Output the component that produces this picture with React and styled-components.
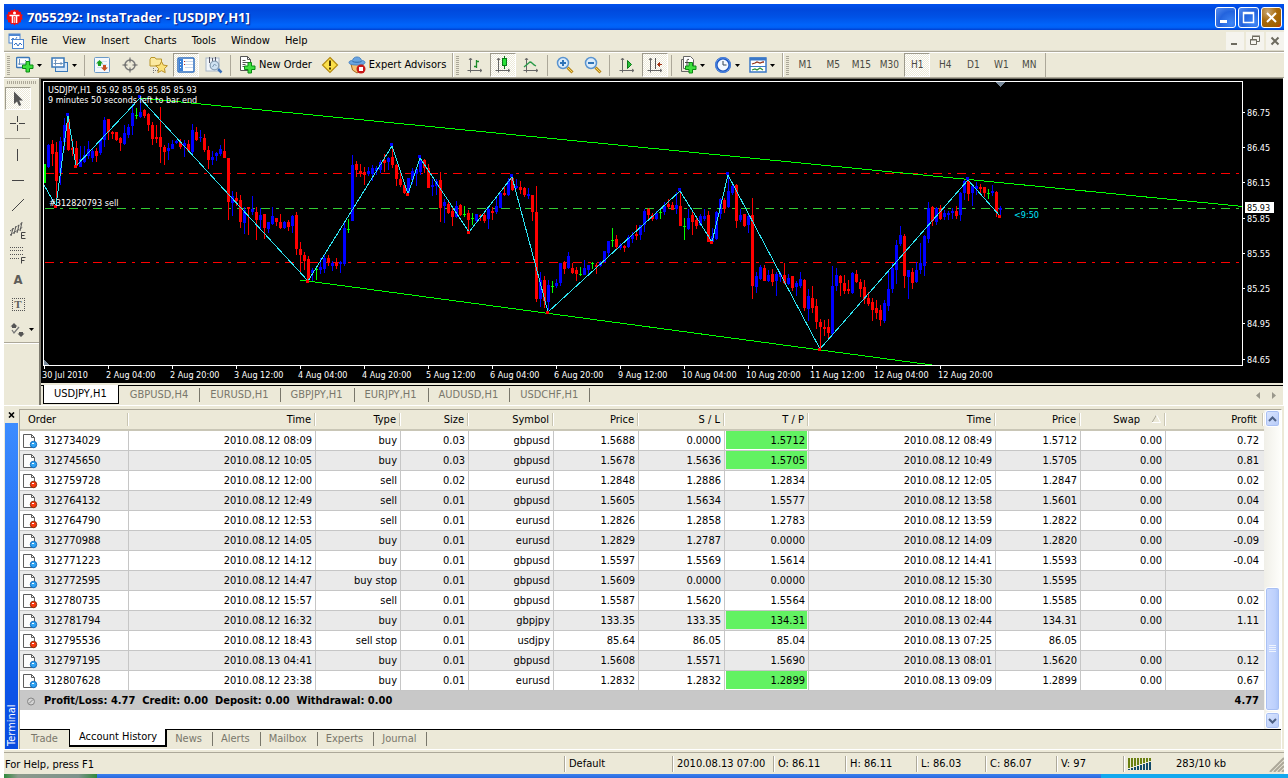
import React from "react";
import styled, { createGlobalStyle, css } from "styled-components";

const FACE = "#ece9d8";
const SHADE = "#aca899";
const UI_FONT = '"DejaVu Sans Condensed", "Liberation Sans", sans-serif';
const CHART_FONT_SIZE = 9;

const GlobalStyle = createGlobalStyle`
  * { box-sizing: border-box; }
  body { margin: 0; background: #fff; }
  button { font: inherit; color: inherit; border: 0; padding: 0; margin: 0; background: none; border-radius: 0; }
  svg { display: block; flex: none; }
`;

const Window = styled.div`
  margin: 4px 4px 0;
  background: ${FACE};
  font: 11px/14px ${UI_FONT};
  color: #000;
  cursor: default;
`;

/* ---------- title bar and menu ---------- */

const TitleBar = styled.header`
  display: flex;
  align-items: center;
  height: 26px;
  padding: 0 2px;
  gap: 2px;
  background: linear-gradient(#0050ee, #0048dc 20%, #0052e6 50%, #0064fb 80%, #0060f6 90%, #003fd0);
`;

const Title = styled.h1`
  flex: 1;
  margin: 0;
  padding-left: 2px;
  color: #fff;
  font: bold 13px/20px "Open Sans", sans-serif;
  text-shadow: 1px 1px 1px #0a1883;
  white-space: pre;
`;

const CaptionButton = styled.button`
  width: 21px;
  height: 21px;
  border: 1px solid #fff;
  border-radius: 3px;
  background: ${(p) =>
    p.$close
      ? "radial-gradient(circle at 30% 20%, #c9a875, #a8690a 45%, #a06000 80%, #e02000)"
      : "radial-gradient(circle at 80% 80%, #3f86f5, #2363dd 55%, #5a8fee)"};
`;

const MenuBar = styled.nav`
  display: flex;
  align-items: center;
  height: 22px;
  padding: 0 0 0 4px;
  border-bottom: 1px solid ${SHADE};
  box-shadow: inset 0 -1px #dcd9ca;
`;

const MenuItem = styled.button`
  height: 20px;
  padding: 0 7px 0 8px;
  &:first-of-type { margin-left: -1px; }
`;

const MdiButtons = styled.div`
  display: flex;
  gap: 2px;
  margin-left: auto;
`;

const MdiButton = styled.button`
  width: 18px;
  height: 18px;
  background: #f5f4ee;
`;

/* ---------- toolbar ---------- */

const ToolBar = styled.div`
  display: flex;
  height: 26px;
  border-top: 1px solid #fff;
  border-bottom: 1px solid ${SHADE};
`;

const ToolGroup = styled.div`
  display: flex;
  align-items: center;
  padding-right: 2px;
  border-left: 1px solid #fff;
  border-right: 1px solid ${SHADE};
`;

const Grip = styled.i`
  flex: none;
  width: 3px;
  height: 19px;
  margin: 0 2px;
  background: repeating-linear-gradient(${SHADE} 0 1px, transparent 1px 2px);
  ${(p) =>
    p.$across &&
    css`
      width: 30px;
      height: 3px;
      margin: 2px 2px;
      background: repeating-linear-gradient(90deg, ${SHADE} 0 1px, transparent 1px 2px);
    `}
`;

const ToolDivider = styled.i`
  flex: none;
  width: 2px;
  height: 21px;
  margin: 0 2px;
  border-left: 1px solid ${SHADE};
`;

const pressed = css`
  border-color: #9d9a8c #fff #fff #9d9a8c;
  background: repeating-conic-gradient(#fff 0 25%, ${FACE} 0 50%) 0 0 / 2px 2px;
`;

const ToolButton = styled.button`
  display: flex;
  align-items: center;
  justify-content: center;
  width: 26px;
  height: 24px;
  margin: 0 1px;
  border: 1px solid transparent;
  ${(p) => p.$pressed && pressed}
`;

const MenuToolButton = styled(ToolButton)`
  width: 33px;
  justify-content: flex-start;
  gap: 3px;
  padding-left: 2px;
`;

const WideToolButton = styled(ToolButton)`
  width: auto;
  gap: 3px;
  padding: 0 2px;
  white-space: nowrap;
`;

const PeriodButton = styled(ToolButton)`
  font-size: 10px;
  color: #4a4943;
`;

/* ---------- chart area ---------- */

const Workspace = styled.div`
  display: flex;
  border-bottom: 1px solid #fff;
`;

const SideBar = styled.div`
  width: 35px;
  flex: none;
  border-top: 1px solid #fff;
`;

const SideTools = styled.div`
  display: flex;
  flex-direction: column;
  align-items: flex-start;
  padding-left: 1px;
  border-bottom: 1px solid ${SHADE};
  box-shadow: 0 1px #fff;
`;

const SideButton = styled.button`
  display: flex;
  align-items: center;
  justify-content: center;
  width: 26px;
  height: 23px;
  margin: 1px 0;
  border: 1px solid transparent;
  ${(p) => p.$pressed && pressed}
`;

const SideMenuButton = styled(SideButton)`
  width: 33px;
  justify-content: flex-start;
  gap: 2px;
  padding-left: 3px;
`;

const SideDivider = styled.i`
  width: 25px;
  height: 1px;
  margin: 2px 0 3px;
  background: ${SHADE};
`;

const ChartColumn = styled.main`
  flex: 1;
  min-width: 0;
  border-left: 2px solid #7d7a6e;
  border-right: 1px solid #fff;
`;

const ChartWindow = styled.section`
  padding: 2px 1px 0 1px;
  border-top: 1px solid #716f64;
  background: #000;
`;

const PlotRow = styled.div`
  display: flex;
`;

const PlotFrame = styled.div`
  flex: 1;
  min-width: 0;
  margin-left: 1px;
  border: 1px solid #fff;
`;

const ChartTabs = styled.div`
  display: flex;
  align-items: flex-start;
  height: 20px;
  margin-top: 2px;
  padding-left: 2px;
  border-top: 1px solid #000;
`;

const ChartTab = styled.button`
  display: flex;
  align-items: center;
  height: 14px;
  margin-top: 2px;
  padding: 0 11px 0 10px;
  border-right: 1px solid #79776b;
  color: #79776b;
  ${(p) =>
    p.$active &&
    css`
      height: 19px;
      margin: -1px 1px 0 0;
      padding: 0 11px 0 10px;
      border: 1px solid #000;
      border-width: 0 1px 1px;
      background: #fff;
      color: #000;
    `}
`;

const TabArrows = styled.div`
  display: flex;
  gap: 12px;
  margin: 6px 7px 0 auto;
`;

/* ---------- terminal ---------- */

const Terminal = styled.section`
  display: flex;
  padding: 3px 2px 0 1px;
  border-bottom: 1px solid #fff;
`;

const TerminalStrip = styled.div`
  display: flex;
  flex-direction: column;
  align-items: center;
  width: 13px;
  flex: none;
  margin-right: 1px;
`;

const CloseButton = styled.button`
  display: flex;
  align-items: center;
  justify-content: center;
  height: 14px;
  width: 13px;
  padding-bottom: 3px;
`;

const TerminalCaption = styled.div`
  flex: 1;
  display: flex;
  align-items: center;
  width: 13px;
  padding-top: 3px;
  writing-mode: vertical-rl;
  transform: rotate(180deg);
  line-height: 13px;
  color: #fff;
  background: linear-gradient(#0a4ce0, #0c55e8 20%, #3c8cff 100%);
`;

const TerminalBody = styled.div`
  flex: 1;
  min-width: 0;
  border-left: 1px solid ${SHADE};
  border-top: 1px solid ${SHADE};
  border-right: 1px solid #fff;
`;

const TableArea = styled.div`
  display: flex;
  background: #fff;
  border-bottom: 1px solid #000;
`;

const TableHolder = styled.div`
  flex: 1;
  min-width: 0;
  padding-bottom: 19px;
`;

const OrdersTable = styled.table`
  width: 100%;
  table-layout: fixed;
  border-collapse: separate;
  border-spacing: 0;
`;

const HeadCell = styled.th`
  height: 21px;
  padding: 0 5px 0 8px;
  border-bottom: 2px solid #c9c6b6;
  background: linear-gradient(90deg, transparent calc(100% - 2px), #c9c5b2 calc(100% - 2px) calc(100% - 1px), #fff calc(100% - 1px)) 0 3px / 100% 13px no-repeat ${FACE};
  font-weight: normal;
  text-align: ${(p) => (p.$first ? "left" : "right")};
  &:last-child { padding-right: 7px; }
`;

const SortMark = styled.span`
  display: inline-block;
  margin-left: 12px;
`;

const Cell = styled.td`
  height: 20px;
  padding: 0 3px 0 0;
  border-right: 1px solid #c6c6c6;
  border-bottom: 1px solid #c6c6c6;
  text-align: right;
  white-space: nowrap;
  ${(p) =>
    p.$hit &&
    css`
      background: linear-gradient(#62f262, #62f262) 1px 0 / calc(100% - 2px) calc(100% - 1px) no-repeat;
    `}
  &:last-child { padding-right: 5px; border-right: 0; }
`;

const OrderRow = styled.tr`
  background: ${(p) => (p.$alt ? "#eaeaea" : "#fff")};
`;

const OrderCell = styled.td`
  height: 20px;
  padding: 0 0 0 3px;
  border-right: 1px solid #c6c6c6;
  border-bottom: 1px solid #c6c6c6;
`;

const OrderLabel = styled.div`
  display: flex;
  align-items: center;
  gap: 6px;
`;

const SummaryCell = styled.td`
  height: 19px;
  padding: 0 5px 0 3px;
  background: #c8c8c8;
  font-weight: bold;
  white-space: pre;
  text-align: ${(p) => (p.$right ? "right" : "left")};
`;

const ScrollBar = styled.div`
  display: flex;
  flex-direction: column;
  width: 17px;
  flex: none;
  padding-left: 1px;
  background: linear-gradient(90deg, #f0efe8, #fefefb);
`;

const ScrollButton = styled.button`
  display: flex;
  align-items: center;
  justify-content: center;
  flex: none;
  width: 15px;
  height: 17px;
  border: 1px solid #fff;
  border-radius: 3px;
  background: linear-gradient(135deg, #dbe6fe, #b7cbf8);
  box-shadow: inset 0 0 0 1px #a9c0f3;
`;

const ScrollThumb = styled(ScrollButton)`
  height: 39%;
  margin: auto 0 1px;
  background: linear-gradient(90deg, #cbdafe, #bdd0fc 70%, #aac4f8);
`;

const PanelTabs = styled.div`
  display: flex;
  align-items: flex-start;
  height: 19px;
`;

const PanelTab = styled.button`
  height: 14px;
  margin-top: 2px;
  padding: 0 10px 0 8px;
  border-right: 1px solid ${(p) => (p.$first ? "transparent" : "#79776b")};
  color: #79776b;
  ${(p) => p.$first && "padding-left: 11px;"}
  ${(p) =>
    p.$active &&
    css`
      height: 18px;
      margin-top: -1px;
      padding: 0 8px 0 9px;
      border: 1px solid #000;
      border-width: 0 2px 2px 1px;
      background: #fff;
      color: #000;
    `}
`;

/* ---------- status bar ---------- */

const StatusBar = styled.footer`
  display: flex;
  align-items: stretch;
  margin-top: 2px;
  height: 22px;
  padding: 3px 0 2px;
  border-top: 1px solid ${SHADE};
`;

const StatusText = styled.div`
  flex: 1;
  padding-left: 1px;
  line-height: 18px;
`;

const StatusCell = styled.div`
  width: ${(p) => p.$width}px;
  flex: none;
  padding-left: 4px;
  border-left: 1px solid ${SHADE};
  box-shadow: inset 1px 0 #fff;
  line-height: 18px;
  display: flex;
  align-items: center;
`;

const Traffic = styled.span`
  flex: 1;
  padding-left: 24px;
`;

const TaskBar = styled.div`
  display: flex;
  height: 4px;
  margin-left: 4px;
  background: linear-gradient(#3a80ee, #2a68dd);
`;

const StartEdge = styled.div`
  width: 93px;
  background: linear-gradient(90deg, #2f8a3c, #8c9a8c 15%, #7d938c 80%, #2f8a3c);
`;

const TrayEdge = styled.div`
  width: 187px;
  margin-left: auto;
  background: #12a8ee;
`;

/* ---------- icons ---------- */

const Icon = ({ w = 18, h = 18, children }) => (
  <svg width={w} height={h} viewBox={`0 0 ${w} ${h}`} fill="none" aria-hidden="true">
    {children}
  </svg>
);

const Plus = ({ x, y }) => (
  <path
    transform={`translate(${x} ${y})`}
    d="M4 .5h3.500v3.500h3.500v3.500h-3.500v3.500h-3.500v-3.500h-3.500v-3.500h3.500z"
    fill="#3ee03e"
    stroke="#0a8a12"
  />
);

const DropArrow = () => (
  <Icon w={5} h={3}>
    <path d="M0 0h5L2.500 3z" fill="#000" />
  </Icon>
);

const Logo = () => (
  <Icon w={17} h={17}>
    <path
      d="M8.500 0l1.500 1.600 2-.8.9 2 2.100.2-.1 2.100 1.900 1-1 1.900 1 2-1.900 1.100.1 2.100-2.100.3-.9 2-2-.7-1.500 1.700L7 14.800l-2 .7-.9-2-2.100-.3.1-2.100-1.900-1.100 1-2-1-1.900 1.900-1L2 3l2.100-.2.9-2 2 .8z"
      fill="#f01010"
    />
    <circle cx="8.500" cy="4" r="1.500" fill="#fff" />
    <path d="M3.500 6.500h10M6.500 7v7M10.500 7v7" stroke="#fff" strokeWidth="1.600" />
    <path d="M8.500 8v6" stroke="#ffb0a0" />
  </Icon>
);

const ChartsIcon = () => (
  <Icon w={16} h={16}>
    <rect x="1" y="1" width="11" height="9" fill="#fff" stroke="#4d86d0" />
    <path d="M1 2h11" stroke="#4d86d0" strokeWidth="2" />
    <path d="M3 7l2-2 2 2 2-3" stroke="#4d86d0" />
    <rect x="4.500" y="6.500" width="11" height="9" fill="#fff" stroke="#4d86d0" />
    <path d="M6 12l2-2 2 3 2-3 2 2" stroke="#2f6cc0" />
  </Icon>
);

const NewChartIcon = () => (
  <Icon>
    <rect x=".5" y="1.500" width="13" height="10" rx="1" fill="#fff" stroke="#3a78b8" strokeWidth="1.500" />
    <path d="M3.500 3v6M2 8h9M9 4l2 2" stroke="#6a90b8" />
    <Plus x={6} y={5} />
  </Icon>
);

const ProfilesIcon = () => (
  <Icon>
    <rect x="4.500" y="6.500" width="12" height="9" fill="#d8e8f8" stroke="#3a78b8" />
    <rect x="1" y="2" width="12" height="9" fill="#fff" stroke="#3a78b8" strokeWidth="1.500" />
    <path d="M4.500 3.500v6M2.500 7.500h9M3.500 4.500h2M9.500 6.500l2 1-2 1" stroke="#6a90b8" />
  </Icon>
);

const MarketWatchIcon = () => (
  <Icon>
    <rect x="1.500" y="1.500" width="15" height="15" rx="1" fill="#f4f8fc" stroke="#6a9ac8" />
    <path d="M4 5.500h10M4 8.500h10M4 11.500h10" stroke="#cfe0f0" />
    <path d="M6.500 4L10 7.500H8V10H5V7.500H3z" fill="#18a020" />
    <path d="M11.500 15L8 11.500h2V9h3v2.500h2z" fill="#c85020" />
  </Icon>
);

const CrosshairIcon = () => (
  <Icon>
    <circle cx="9" cy="9" r="5" stroke="#7a7a7a" strokeWidth="1.500" />
    <path d="M9 1.500v5M9 11.500v5M1.500 9h5M11.500 9h5" stroke="#5c5c5c" />
  </Icon>
);

const FavoritesIcon = () => (
  <Icon w={19}>
    <path d="M1 3.500l1-2h4l1 1.500h5.500v7H1z" fill="#fbe9a0" stroke="#b8962a" />
    <path d="M4.500 12v5M6 14.500h3" stroke="#777" strokeDasharray="1 1" />
    <path
      d="M12.500 5.500l1.900 3.600 4 .6-2.900 2.900.7 4-3.700-1.900-3.600 1.900.7-4-2.900-2.900 4-.6z"
      fill="#fbe27a"
      stroke="#b8902a"
    />
  </Icon>
);

const TerminalIcon = () => (
  <Icon>
    <rect x="1" y="2" width="16" height="14" rx="1" fill="#fff" stroke="#2f6fc0" strokeWidth="1.500" />
    <path d="M2 3h4v12H2z" fill="#3a80d8" />
    <path d="M3 5.500h1M3 8.500h1M3 11.500h1" stroke="#fff" />
    <path d="M8 5.500h8M8 8.500h8M8 11.500h8" stroke="#c8d8ec" />
    <path d="M7 5h1v1H7zM7 8h1v1H7z" fill="#c03020" />
  </Icon>
);

const MagnifierHandle = () => (
  <path d="M11.500 11.500l5 5" stroke="#b88618" strokeWidth="3" />
);

const TesterIcon = () => (
  <Icon>
    <rect x="1" y="2" width="13" height="13" fill="#f2f6fa" stroke="#a8b8c8" />
    <path d="M4.500 1v6M7.500 2v4M10.500 1v6" stroke="#556" />
    <path d="M13 13l3.500 3.500" stroke="#3a70b8" strokeWidth="2.500" />
    <circle cx="9.500" cy="9.500" r="4.300" fill="#cfe2f2" stroke="#8aa0b4" strokeWidth="1.300" />
    <path d="M7.500 11l2-3 2 2" stroke="#7c98b0" />
  </Icon>
);

const NewOrderIcon = () => (
  <Icon>
    <path d="M2.500.500h7l3 3v11h-10z" fill="#fff" stroke="#555" />
    <path d="M9.500.500v3h3" stroke="#555" />
    <path d="M4.500 4.500h3M4.500 6.500h6M4.500 8.500h3M4.500 10.500h2" stroke="#555" />
    <Plus x={6} y={6} />
  </Icon>
);

const WarningIcon = () => (
  <Icon>
    <path d="M9 1.500L16.500 9 9 16.500 1.500 9z" fill="#fbe04a" stroke="#b48a10" strokeWidth="1.200" />
    <path d="M9 4.500v5.500M9 11.500v2" stroke="#4a3500" strokeWidth="2" />
  </Icon>
);

const ExpertIcon = () => (
  <Icon>
    <path d="M3 8h12l-1.500 6L9 17l-4.500-3z" fill="#f4c070" stroke="#a86818" />
    <path d="M1 6.500c0-1.500 2-2 3.500-2C5 2 7 1 9 1s4 1 4.500 3.500c1.500 0 3.500.5 3.500 2C17 8.500 13 9 9 9S1 8.500 1 6.500z" fill="#6aa4e0" stroke="#4a84c4" />
    <path d="M4.500 5.500c2 1 7 1 9 0" stroke="#2f68a8" />
    <circle cx="13" cy="13" r="4.500" fill="#c81818" />
    <rect x="11" y="11" width="4" height="4" fill="#fff" />
  </Icon>
);

const Axes = () => <path d="M4.500 2.500v14M1.500 14.500h14M3 4l1.500-2L6 4M14 13l2 1.500-2 1.500" stroke="#666" />;

const BarChartIcon = () => (
  <Icon>
    <Axes />
    <path d="M10.500 4v8M8 10.500h2.500M10.500 5.500h2.500" stroke="#1c8a28" strokeWidth="1.300" />
  </Icon>
);

const CandleIcon = () => (
  <Icon>
    <Axes />
    <path d="M10.500 0v13" stroke="#0a7a18" />
    <rect x="8.500" y="2.500" width="4" height="7" fill="#28e038" stroke="#0a7a18" />
  </Icon>
);

const LineChartIcon = () => (
  <Icon>
    <Axes />
    <path d="M2 11l6-5c2 0 2 2 6 4" stroke="#2a9a48" strokeWidth="1.300" />
  </Icon>
);

const ZoomIcon = ({ plus }) => (
  <Icon>
    <MagnifierHandle />
    <path d="M12 12l4 4" stroke="#f6d860" />
    <circle cx="7" cy="7" r="5.500" fill="#dcecfa" stroke="#5a94d0" strokeWidth="1.500" />
    <path d={plus ? "M4 7h6M7 4v6" : "M4 7h6"} stroke="#2f74b8" strokeWidth="2" />
  </Icon>
);

const AutoScrollIcon = () => (
  <Icon>
    <Axes />
    <path d="M9.500 4.500v8l4-4z" fill="#28c038" stroke="#0a7a18" />
  </Icon>
);

const ShiftIcon = () => (
  <Icon>
    <Axes />
    <path d="M9.500 2v11" stroke="#555" />
    <path d="M16 8.500h-4M13.500 6.500l-2 2 2 2z" stroke="#a03010" fill="#a03010" />
  </Icon>
);

const IndicatorsIcon = () => (
  <Icon>
    <path d="M4.500.500h7l3 3v9h-10z" fill="#fff" stroke="#666" />
    <path d="M4.500 3.500h-2v12h8" stroke="#666" />
    <path d="M10 3.500c-2-1-2 1-2 2v5M6 6.500h4" stroke="#444" />
    <Plus x={6} y={6} />
  </Icon>
);

const ClockIcon = () => (
  <Icon>
    <circle cx="9" cy="9" r="6.700" fill="#f2f8ff" stroke="#1f58c0" strokeWidth="2.600" />
    <circle cx="9" cy="9" r="7.200" stroke="#5a94ec" />
    <path d="M9 5v4h3.500" stroke="#345" />
  </Icon>
);

const TemplateIcon = () => (
  <Icon>
    <rect x="1" y="2" width="16" height="14" fill="#fff" stroke="#3a78c8" strokeWidth="1.500" />
    <path d="M1 3h16" stroke="#3a78c8" strokeWidth="3" />
    <path d="M1 10.500h16" stroke="#3a78c8" />
    <path d="M3 8l3-1 2-1 3 1 3-1h1" stroke="#903018" strokeWidth="1.300" />
    <path d="M3 14l3-1 2 1 3-2 3 2" stroke="#2a9038" strokeWidth="1.300" />
  </Icon>
);

const CursorIcon = () => (
  <Icon>
    <path d="M5 1.500v12.500l3-2.500 2 4.500 2.200-1-2-4.500H14z" fill="#555" />
  </Icon>
);

const CrossIcon = () => (
  <Icon>
    <path d="M8.500 1v6M8.500 10v6M1 8.500h6M10 8.500h6" stroke="#444" />
  </Icon>
);

const SideLine = ({ d }) => (
  <Icon>
    <path d={d} stroke="#444" />
  </Icon>
);

const ChannelIcon = () => (
  <Icon>
    <path d="M1 10L13 2M1 14L14 6" stroke="#555" strokeDasharray="2 1" />
    <path d="M2 15l2-8M5 13l2-8M8 12l2-8M11 10l2-9" stroke="#555" />
    <path d="M16.500 11.500h-4v6h4M12.500 14.500h3" stroke="#444" />
  </Icon>
);

const FiboIcon = () => (
  <Icon>
    <path d="M1 1.500h14M1 4.500h14M1 8.500h14M1 12.500h10" stroke="#555" strokeDasharray="1 1" />
    <path d="M12.500 17.500v-6h4M12.500 14.500h3" stroke="#444" />
  </Icon>
);

const LetterIcon = styled.span`
  font: bold 13px/18px ${UI_FONT};
  color: #5e5d58;
`;

const LabelBox = styled.span`
  width: 13px;
  height: 13px;
  border: 1px dotted #555;
  font: bold 11px/11px "Liberation Serif", serif;
  color: #5e5d58;
  text-align: center;
`;

const ArrowsIcon = () => (
  <Icon>
    <path d="M5 2l3.500 3.500H7V7H3V5.500H1.500zM12 16l-3.500-3.500H10V11h4v1.500h1.500z" fill="#555" />
    <path d="M3 9l2 3 5-6" stroke="#777" strokeWidth="1.300" />
  </Icon>
);

const OrderIcon = ({ side }) => (
  <Icon w={15} h={16}>
    <path d="M.5 1.500h8l3 3v10h-11z" fill="#fdfdfd" stroke="#5c5c5c" />
    <path d="M8.500 1.500v3h3" stroke="#5c5c5c" />
    <circle cx="10.500" cy="11.500" r="3.200" fill={side === "buy" ? "#2fa4f4" : "#f83a10"} stroke={side === "buy" ? "#1568b8" : "#8a3008"} />
    <path d="M9 10.500h2" stroke="#fff" />
  </Icon>
);

const SummaryIcon = () => (
  <Icon w={15} h={16}>
    <circle cx="8" cy="8.500" r="3.500" fill="#d4d4d4" stroke="#858585" />
    <path d="M6 10.500l4-4" stroke="#858585" />
  </Icon>
);

const TrafficIcon = () => (
  <Icon w={24} h={12}>
    {[0, 1, 2, 3, 4, 5, 6, 7].map((i) => (
      <g key={i} shapeRendering="crispEdges">
        <rect x={i * 3} y="0" width="2" height={10 - i} fill="#6a8010" />
        <rect x={i * 3} y={11 - i} width="2" height={i + 1} fill="#124a6a" />
      </g>
    ))}
  </Icon>
);

/* ---------- chart data ---------- */

// One entry per bar: colour, then the y of its high, body top, body bottom and low.
const BARS = `
G 84 84 103 103|B 64 65 87 88|R 60 64 74 86|R 62 72 101 126|B 57 61 93 105|B 38 45 62 70|R 34 39 70 71|R 59 68 70 76
R 61 68 86 87|B 66 79 87 87|B 66 75 82 83|B 61 69 76 79|B 68 71 78 82|R 68 71 76 82|B 59 60 73 75|B 37 40 60 67
R 39 39 52 60|R 51 52 54 59|R 52 52 60 61|R 57 58 63 71|B 45 53 64 65|B 44 47 55 58|B 24 33 46 55|G 28 35 35 39
B 18 32 37 38|R 29 30 36 38|R 33 34 45 51|R 42 45 59 65|R 45 57 59 63|R 27 57 67 83|R 65 67 72 85|B 63 68 71 80
B 60 64 69 69|B 60 61 63 64|R 59 62 67 69|B 60 63 66 77|R 60 64 71 72|B 44 50 72 74|R 47 52 60 61|B 50 57 58 62
R 54 58 70 72|R 66 70 80 89|B 71 77 80 85|B 72 73 76 81|B 65 69 74 76|R 59 71 78 78|R 78 78 122 140|B 111 116 123 136
R 112 118 121 126|R 115 120 142 148|B 127 130 143 154|R 127 127 129 155|B 116 129 132 135|R 127 132 140 160|B 128 135 140 150|R 134 134 148 159
B 142 142 149 153|B 127 136 144 145|R 138 138 142 146|R 134 142 148 149|B 141 142 148 149|R 140 142 147 151|B 135 136 146 153|R 132 135 169 175
R 162 169 175 193|R 172 175 181 190|R 176 179 200 202|B 188 190 193 201|G 186 189 189 200|B 178 187 190 194|B 174 178 189 193|R 175 178 183 186
B 181 183 186 191|R 178 182 186 189|B 181 182 184 193|B 143 148 184 186|G 139 149 149 153|B 75 85 141 141|R 81 84 90 97|R 84 91 94 97
R 87 92 95 105|B 87 91 94 96|B 85 88 94 101|B 86 88 91 95|B 80 82 90 93|R 74 80 83 92|B 77 78 82 90|R 64 77 85 88
R 84 85 99 106|R 92 99 105 107|R 102 105 113 114|B 98 98 113 115|B 88 91 100 104|B 88 89 94 106|B 77 79 92 95|R 79 80 88 93
R 84 88 108 108|B 99 105 107 116|B 99 101 106 115|R 92 100 128 142|B 119 122 126 143|R 122 124 133 134|R 126 131 137 146|B 121 126 137 138
R 124 125 135 136|G 126 134 134 137|R 130 133 140 151|G 133 138 138 145|B 134 134 141 143|R 134 135 137 141|R 132 135 141 143|B 126 129 139 149
R 127 131 133 140|B 116 126 132 134|B 112 113 128 128|R 107 113 115 116|B 98 101 115 116|R 96 98 110 111|B 99 106 108 109|R 101 107 110 114
R 107 108 115 117|B 108 114 116 119|R 115 115 132 141|R 106 132 219 222|B 192 200 219 227|R 196 200 221 228|B 200 205 222 230|G 201 206 206 213
B 199 203 206 208|B 183 183 203 206|R 181 182 189 194|B 172 176 188 189|R 183 188 193 194|R 187 190 194 201|G 187 194 194 196|B 180 188 195 195
B 185 185 190 195|G 182 183 183 189|R 183 185 187 194|B 181 182 186 187|B 171 171 182 183|B 161 161 173 177|G 148 160 160 167|R 155 159 167 170
B 163 165 168 170|R 165 166 168 172|B 155 157 167 168|B 152 155 159 163|R 145 154 156 160|B 145 145 155 160|B 129 131 145 152|R 128 129 135 139
R 133 135 139 141|B 131 133 139 140|G 128 132 132 139|B 122 126 132 135|R 119 124 127 129|R 122 125 130 130|B 112 125 129 134|R 111 126 146 146
G 138 146 146 160|B 129 138 149 150|R 131 135 142 155|R 138 140 146 149|B 134 136 145 146|B 129 136 139 141|R 131 135 162 162|B 148 156 162 163
B 131 132 159 160|B 118 119 134 139|R 118 120 129 133|B 95 111 127 128|B 103 106 113 115|R 104 105 141 148|B 129 135 140 142|R 134 134 146 147
B 135 136 145 153|R 118 135 206 219|B 192 196 207 213|B 185 187 199 200|R 185 188 201 201|B 190 195 201 202|R 189 194 202 206|B 192 194 201 216
B 192 194 197 202|R 183 195 203 204|B 194 198 204 205|R 196 196 208 211|B 201 203 207 216|B 192 199 206 208|R 199 200 228 231|B 209 216 229 241
R 206 218 228 233|R 219 226 242 249|R 239 242 247 268|R 240 247 249 256|R 239 247 253 260|B 186 206 254 256|B 188 195 206 211|R 195 196 203 216
R 195 203 211 214|R 200 209 211 214|B 192 193 213 214|R 190 194 202 203|R 199 202 209 217|R 200 207 219 224|R 212 218 224 226|R 218 222 230 241
R 220 228 233 239|R 225 230 240 246|B 220 223 241 243|B 191 209 226 231|B 183 188 209 213|B 160 165 190 204|B 146 155 164 166|R 154 156 196 208
B 190 190 197 219|R 188 192 203 209|B 182 190 202 203|B 163 183 190 194|B 155 156 186 196|B 122 128 159 163|R 126 127 141 146|B 127 128 142 145
R 125 128 139 140|B 130 133 137 140|B 131 133 135 140|B 128 131 133 139|R 126 131 136 139|B 112 113 135 141|B 100 101 113 120|R 99 101 114 121
B 105 106 113 126|B 102 106 109 115|R 104 107 109 114|R 107 107 113 117|G 109 113 113 119|B 105 111 113 116|R 111 112 132 137|B 126 128 130 136`
  .trim()
  .split(/[|\n]/)
  .map((entry) => {
    const [tone, ...ys] = entry.split(" ");
    return [tone, ...ys.map(Number)];
  });

const BAR_COLOURS = { R: "#ff0000", B: "#0000ff", G: "#00ff00" };
const BAR_STEP = 4;

const ZIGZAG = [
  [0, 103], [12, 124], [24, 34], [32, 84], [96, 16], [264, 199], [348, 64], [364, 112], [376, 76], [425, 150],
  [468, 95], [504, 230], [636, 109], [668, 160], [684, 93], [776, 267], [924, 98], [956, 134],
];

const PRICES = [
  ["86.75", 112], ["86.45", 147], ["86.15", 182], ["85.85", 218],
  ["85.55", 253], ["85.25", 288], ["84.95", 323], ["84.65", 359],
];

const TIMES = [
  "30 Jul 2010", "2 Aug 04:00", "2 Aug 20:00", "3 Aug 12:00", "4 Aug 04:00", "4 Aug 20:00", "5 Aug 12:00",
  "6 Aug 04:00", "6 Aug 20:00", "9 Aug 12:00", "10 Aug 04:00", "10 Aug 20:00", "11 Aug 12:00", "12 Aug 04:00",
  "12 Aug 20:00",
];

const PlotSvg = styled.svg`
  width: 100%;
  height: 283px;
  font: ${CHART_FONT_SIZE}px ${UI_FONT};
  text { white-space: pre; }
`;

const AxisSvg = styled.svg`
  font: ${CHART_FONT_SIZE}px ${UI_FONT};
`;

const Level = ({ y, color }) => (
  <line x1="1" x2="100%" y1={y + 0.5} y2={y + 0.5} stroke={color} strokeDasharray="9 6 3 6" />
);

function Plot() {
  return (
    <PlotSvg role="img" aria-label="USDJPY H1 candlestick chart">
      <g shapeRendering="crispEdges">
        <Level y={91} color="#ff0000" />
        <Level y={126} color="#32cd32" />
        <Level y={180} color="#ff0000" />
        <g transform="translate(0 -2)">
          {BARS.map(([tone, high, top, bottom, low], i) => (
            <g key={i} fill={BAR_COLOURS[tone]}>
              <rect x={i * BAR_STEP} y={high} width="1" height={low - high} />
              <rect x={i * BAR_STEP - 1} y={top} width="3" height={Math.max(1, bottom - top)} />
            </g>
          ))}
        </g>
        <path d="M951 0h10l-5 5zM0 278v5h5z" fill="#778899" />
        <path d="M96 16L1199 124.500M256 198L888 283" stroke="#00ff00" fill="none" />
        <polyline points={ZIGZAG.map((p) => p.join(",")).join(" ")} stroke="#2ee6f4" fill="none" />
        {ZIGZAG.slice(1).map(([x, y], i) => (
          <rect key={x} x={x - 2} y={i % 2 ? y - 3 : y - 1} width="3" height="3" fill={i % 2 ? "#0000ff" : "#ff0000"} />
        ))}
      </g>
      <g fill="#fff">
        <text x="4" y="11">{"USDJPY,H1  85.92 85.95 85.85 85.93"}</text>
        <text x="4" y="21">9 minutes 50 seconds left to bar end</text>
        <text x="5" y="124">#312820793 sell</text>
        <text x="970" y="136" fill="#00e8ff">&lt;9:50</text>
      </g>
    </PlotSvg>
  );
}

function PriceAxis() {
  return (
    <AxisSvg width="39" height="285">
      {PRICES.map(([label, y]) => (
        <g key={label} fill="#fff">
          <rect x="0" y={y - 81} width="2" height="1" />
          <text x="4" y={y - 77}>{label}</text>
        </g>
      ))}
      <rect x="2" y="121" width="29" height="11" fill="#fff" />
      <text x="4" y="130" fill="#000">85.93</text>
    </AxisSvg>
  );
}

function TimeAxis() {
  return (
    <AxisSvg width="100%" height="17">
      {TIMES.map((label, i) => (
        <g key={label} fill="#fff">
          <rect x={2 + i * 64} y="0" width="1" height="3" />
          <text x={i * 64} y="12">{label}</text>
        </g>
      ))}
    </AxisSvg>
  );
}

/* ---------- orders ---------- */

const COLUMNS = [
  ["Order", 109], ["Time", 187], ["Type", 85], ["Size", 68], ["Symbol", 85], ["Price", 85],
  ["S / L", 86], ["T / P", 84], ["Time", 187], ["Price", 85], ["Swap", 85], ["Profit", 98],
];

const ORDERS = [
  ["312734029", "2010.08.12 08:09", "buy", "0.03", "gbpusd", "1.5688", "0.0000", "1.5712", "2010.08.12 08:49", "1.5712", "0.00", "0.72", true],
  ["312745650", "2010.08.12 10:05", "buy", "0.03", "gbpusd", "1.5678", "1.5636", "1.5705", "2010.08.12 10:49", "1.5705", "0.00", "0.81", true],
  ["312759728", "2010.08.12 12:00", "sell", "0.02", "eurusd", "1.2848", "1.2886", "1.2834", "2010.08.12 12:05", "1.2847", "0.00", "0.02"],
  ["312764132", "2010.08.12 12:49", "sell", "0.01", "gbpusd", "1.5605", "1.5634", "1.5577", "2010.08.12 13:58", "1.5601", "0.00", "0.04"],
  ["312764790", "2010.08.12 12:53", "sell", "0.01", "eurusd", "1.2826", "1.2858", "1.2783", "2010.08.12 13:59", "1.2822", "0.00", "0.04"],
  ["312770988", "2010.08.12 14:05", "buy", "0.01", "eurusd", "1.2829", "1.2787", "0.0000", "2010.08.12 14:09", "1.2820", "0.00", "-0.09"],
  ["312771223", "2010.08.12 14:12", "buy", "0.01", "gbpusd", "1.5597", "1.5569", "1.5614", "2010.08.12 14:41", "1.5593", "0.00", "-0.04"],
  ["312772595", "2010.08.12 14:47", "buy stop", "0.01", "gbpusd", "1.5609", "0.0000", "0.0000", "2010.08.12 15:30", "1.5595", "", ""],
  ["312780735", "2010.08.12 15:57", "sell", "0.01", "gbpusd", "1.5587", "1.5620", "1.5564", "2010.08.12 18:00", "1.5585", "0.00", "0.02"],
  ["312781794", "2010.08.12 16:32", "buy", "0.01", "gbpjpy", "133.35", "133.35", "134.31", "2010.08.13 02:44", "134.31", "0.00", "1.11", true],
  ["312795536", "2010.08.12 18:43", "sell stop", "0.01", "usdjpy", "85.64", "86.05", "85.04", "2010.08.13 07:25", "86.05", "", ""],
  ["312797195", "2010.08.13 04:41", "buy", "0.01", "gbpusd", "1.5608", "1.5571", "1.5690", "2010.08.13 08:01", "1.5620", "0.00", "0.12"],
  ["312807628", "2010.08.12 23:38", "buy", "0.01", "eurusd", "1.2832", "1.2832", "1.2899", "2010.08.13 09:09", "1.2899", "0.00", "0.67", true],
];

const TP_COLUMN = 7;

function Orders() {
  return (
    <OrdersTable>
      <colgroup>
        {COLUMNS.map(([, width], i) => (
          <col key={i} width={width} />
        ))}
      </colgroup>
      <thead>
        <tr>
          {COLUMNS.map(([name], i) => (
            <HeadCell key={i} $first={i === 0} scope="col">
              {name}
              {name === "Swap" && (
                <SortMark>
                  <Icon w={9} h={8}>
                    <path d="M0 7.500L4.500 0" stroke={SHADE} />
                    <path d="M4.500 0l4 7.500H0" stroke="#fff" />
                  </Icon>
                </SortMark>
              )}
            </HeadCell>
          ))}
        </tr>
      </thead>
      <tbody>
        {ORDERS.map((order, row) => {
          const [id, ...values] = order.slice(0, 12);
          return (
            <OrderRow key={id} $alt={row % 2 === 1}>
              <OrderCell>
                <OrderLabel>
                  <OrderIcon side={order[2].split(" ")[0]} />
                  {id}
                </OrderLabel>
              </OrderCell>
              {values.map((value, i) => (
                <Cell key={i} $hit={order[12] && i + 1 === TP_COLUMN}>{value}</Cell>
              ))}
            </OrderRow>
          );
        })}
      </tbody>
      <tfoot>
        <tr>
          <SummaryCell colSpan={11}>
            <OrderLabel>
              <SummaryIcon />
              {"Profit/Loss: 4.77  Credit: 0.00  Deposit: 0.00  Withdrawal: 0.00"}
            </OrderLabel>
          </SummaryCell>
          <SummaryCell $right>4.77</SummaryCell>
        </tr>
      </tfoot>
    </OrdersTable>
  );
}

const Chevron = ({ up }) => (
  <Icon w={9} h={6}>
    <path d={up ? "M1 5l3.500-3.500L8 5" : "M1 1l3.500 3.500L8 1"} stroke="#4d6185" strokeWidth="2" />
  </Icon>
);

const MENUS = ["File", "View", "Insert", "Charts", "Tools", "Window", "Help"];
const PERIODS = ["M1", "M5", "M15", "M30", "H1", "H4", "D1", "W1", "MN"];
const CHART_TABS = ["USDJPY,H1", "GBPUSD,H4", "EURUSD,H1", "GBPJPY,H1", "EURJPY,H1", "AUDUSD,H1", "USDCHF,H1"];
const PANEL_TABS = ["Trade", "Account History", "News", "Alerts", "Mailbox", "Experts", "Journal"];

export default function App() {
  return (
    <>
      <GlobalStyle />
      <Window>
        <TitleBar>
          <Logo />
          <Title>7055292: InstaTrader - [USDJPY,H1]</Title>
          <CaptionButton aria-label="Minimize">
            <Icon w={19} h={19}>
              <path d="M4 13.500h7" stroke="#fff" strokeWidth="3" />
            </Icon>
          </CaptionButton>
          <CaptionButton aria-label="Maximize">
            <Icon w={19} h={19}>
              <path d="M4.500 4.500h10v10h-10zM4 5.500h11" stroke="#fff" strokeWidth="1.500" />
            </Icon>
          </CaptionButton>
          <CaptionButton $close aria-label="Close">
            <Icon w={19} h={19}>
              <path d="M5 5l9 9M14 5l-9 9" stroke="#fff" strokeWidth="2" />
            </Icon>
          </CaptionButton>
        </TitleBar>

        <MenuBar>
          <ChartsIcon />
          {MENUS.map((name) => (
            <MenuItem key={name}>{name}</MenuItem>
          ))}
          <MdiButtons>
            <MdiButton aria-label="Minimize chart">
              <Icon>
                <path d="M5 12h6" stroke="#6d6b60" strokeWidth="2" />
              </Icon>
            </MdiButton>
            <MdiButton aria-label="Restore chart">
              <Icon>
                <path d="M6.500 7V4.500h7v5H11M6 4h8M4.500 7.500h6v5h-6zM4 8h7" stroke="#6d6b60" />
              </Icon>
            </MdiButton>
            <MdiButton aria-label="Close chart">
              <Icon>
                <path d="M5.500 5.500l7 7M12.500 5.500l-7 7" stroke="#6d6b60" strokeWidth="2" />
              </Icon>
            </MdiButton>
          </MdiButtons>
        </MenuBar>

        <ToolBar>
          <ToolGroup>
            <Grip />
            <MenuToolButton aria-label="New chart"><NewChartIcon /><DropArrow /></MenuToolButton>
            <MenuToolButton aria-label="Profiles"><ProfilesIcon /><DropArrow /></MenuToolButton>
            <ToolDivider />
            <ToolButton aria-label="Market Watch"><MarketWatchIcon /></ToolButton>
            <ToolButton aria-label="Data Window"><CrosshairIcon /></ToolButton>
            <ToolButton aria-label="Navigator"><FavoritesIcon /></ToolButton>
            <ToolButton $pressed aria-label="Terminal"><TerminalIcon /></ToolButton>
            <ToolButton aria-label="Strategy Tester"><TesterIcon /></ToolButton>
            <ToolDivider />
            <WideToolButton><NewOrderIcon />New Order</WideToolButton>
            <ToolButton aria-label="MetaEditor"><WarningIcon /></ToolButton>
            <WideToolButton><ExpertIcon />Expert Advisors</WideToolButton>
          </ToolGroup>
          <ToolGroup>
            <Grip />
            <ToolButton aria-label="Bar chart"><BarChartIcon /></ToolButton>
            <ToolButton $pressed aria-label="Candlesticks"><CandleIcon /></ToolButton>
            <ToolButton aria-label="Line chart"><LineChartIcon /></ToolButton>
            <ToolDivider />
            <ToolButton aria-label="Zoom in"><ZoomIcon plus /></ToolButton>
            <ToolButton aria-label="Zoom out"><ZoomIcon /></ToolButton>
            <ToolDivider />
            <ToolButton aria-label="Auto scroll"><AutoScrollIcon /></ToolButton>
            <ToolButton $pressed aria-label="Chart shift"><ShiftIcon /></ToolButton>
            <ToolDivider />
            <MenuToolButton aria-label="Indicators"><IndicatorsIcon /><DropArrow /></MenuToolButton>
            <MenuToolButton aria-label="Periods"><ClockIcon /><DropArrow /></MenuToolButton>
            <MenuToolButton aria-label="Templates"><TemplateIcon /><DropArrow /></MenuToolButton>
          </ToolGroup>
          <ToolGroup>
            <Grip />
            {PERIODS.map((name) => (
              <PeriodButton key={name} $pressed={name === "H1"}>{name}</PeriodButton>
            ))}
          </ToolGroup>
        </ToolBar>

        <Workspace>
          <SideBar>
            <SideTools>
              <Grip $across />
              <SideButton $pressed aria-label="Cursor"><CursorIcon /></SideButton>
              <SideButton aria-label="Crosshair"><CrossIcon /></SideButton>
              <SideDivider />
              <SideButton aria-label="Vertical line"><SideLine d="M8.500 3v12" /></SideButton>
              <SideButton aria-label="Horizontal line"><SideLine d="M3 9.500h12" /></SideButton>
              <SideButton aria-label="Trendline"><SideLine d="M3 15L15 3" /></SideButton>
              <SideButton aria-label="Equidistant channel"><ChannelIcon /></SideButton>
              <SideButton aria-label="Fibonacci retracement"><FiboIcon /></SideButton>
              <SideButton aria-label="Text"><LetterIcon>A</LetterIcon></SideButton>
              <SideButton aria-label="Text label"><LabelBox>T</LabelBox></SideButton>
              <SideMenuButton aria-label="Arrows"><ArrowsIcon /><DropArrow /></SideMenuButton>
            </SideTools>
          </SideBar>
          <ChartColumn>
            <ChartWindow>
              <PlotRow>
                <PlotFrame><Plot /></PlotFrame>
                <PriceAxis />
              </PlotRow>
              <TimeAxis />
            </ChartWindow>
            <ChartTabs>
              {CHART_TABS.map((name, i) => (
                <ChartTab key={name} $active={i === 0}>{name}</ChartTab>
              ))}
              <TabArrows>
                <Icon w={4} h={7}><path d="M4 0v7L0 3.500z" fill="#9a988c" /></Icon>
                <Icon w={4} h={7}><path d="M0 0v7l4-3.500z" fill="#9a988c" /></Icon>
              </TabArrows>
            </ChartTabs>
          </ChartColumn>
        </Workspace>

        <Terminal>
          <TerminalStrip>
            <CloseButton aria-label="Close terminal">
              <Icon w={7} h={6}><path d="M1 .500l5 5M6 .500l-5 5" stroke="#000" strokeWidth="1.600" /></Icon>
            </CloseButton>
            <TerminalCaption>Terminal</TerminalCaption>
          </TerminalStrip>
          <TerminalBody>
            <TableArea>
              <TableHolder><Orders /></TableHolder>
              <ScrollBar>
                <ScrollButton aria-label="Scroll up"><Chevron up /></ScrollButton>
                <ScrollThumb aria-label="Scroll position">
                  <Icon w={7} h={8}><path d="M0 .500h7M0 2.500h7M0 4.500h7M0 6.500h7" stroke="#eef4fe" /></Icon>
                </ScrollThumb>
                <ScrollButton aria-label="Scroll down"><Chevron /></ScrollButton>
              </ScrollBar>
            </TableArea>
            <PanelTabs>
              {PANEL_TABS.map((name, i) => (
                <PanelTab key={name} $active={i === 1} $first={i === 0}>{name}</PanelTab>
              ))}
            </PanelTabs>
          </TerminalBody>
        </Terminal>

        <StatusBar>
          <StatusText>For Help, press F1</StatusText>
          <StatusCell $width={108}>Default</StatusCell>
          <StatusCell $width={101}>2010.08.13 07:00</StatusCell>
          <StatusCell $width={72}>O: 86.11</StatusCell>
          <StatusCell $width={71}>H: 86.11</StatusCell>
          <StatusCell $width={69}>L: 86.03</StatusCell>
          <StatusCell $width={71}>C: 86.07</StatusCell>
          <StatusCell $width={67}>V: 97</StatusCell>
          <StatusCell $width={161}>
            <TrafficIcon />
            <Traffic>283/10 kb</Traffic>
            <Icon w={15} h={16}>
              <path d="M1 16L15 2M5 16L15 6M9 16l6-6M13 16l2-2" stroke={SHADE} strokeWidth="2" />
            </Icon>
          </StatusCell>
        </StatusBar>
      </Window>
      <TaskBar>
        <StartEdge />
        <TrayEdge />
      </TaskBar>
    </>
  );
}
